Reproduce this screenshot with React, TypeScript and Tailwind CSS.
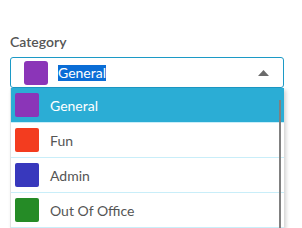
const options = [
  { name: "General", color: "bg-[#8b35b8]" },
  { name: "Fun", color: "bg-[#f33c1f]" },
  { name: "Admin", color: "bg-[#3838bd]" },
  { name: "Out Of Office", color: "bg-[#258b26]" },
];

export default function App() {
  return (
    <div
      className="w-[302px] h-[228px] overflow-hidden bg-white px-[10px] pt-[33px]"
      style={{ fontFamily: "Lato, 'Noto Sans', sans-serif" }}
    >
      <div className="text-[14px] leading-[17px] font-semibold text-[#555]">Category</div>
      <div className="relative mt-[7px] w-[274px]">
        <div className="h-[31px] flex items-center border border-[#1c9ac6] rounded-[3px] pl-[13px] pr-[14px]">
          <div className="w-[24px] h-[24px] rounded-[3px] bg-[#8b35b8]" />
          <span className="ml-[10px] text-[14px] leading-[16px] bg-[#0a6dd6] text-white">General</span>
          <svg className="ml-auto" width="11" height="6" viewBox="0 0 11 6">
            <path d="M0 6 L5.5 0 L11 6 Z" fill="#6b6b6b" />
          </svg>
        </div>
        <div className="absolute left-0 top-[31px] w-[274px] bg-white border-l border-[#e2e2e2] shadow-[2px_2px_4px_rgba(0,0,0,0.18)]">
          {options.map((o, i) => (
            <div
              key={o.name}
              className={
                "h-[35px] flex items-center pl-[4px] border-b border-[#c9eef9] " +
                (i === 0 ? "bg-[#2badd5] text-white" : "text-[#555]")
              }
            >
              <div className={"w-[24px] h-[24px] rounded-[2px] " + o.color} />
              <span className="ml-[11px] text-[14px]">{o.name}</span>
            </div>
          ))}
          <div className="absolute right-[3px] top-[12px] bottom-0 w-[2px] bg-[#808080]" />
        </div>
      </div>
    </div>
  );
}
